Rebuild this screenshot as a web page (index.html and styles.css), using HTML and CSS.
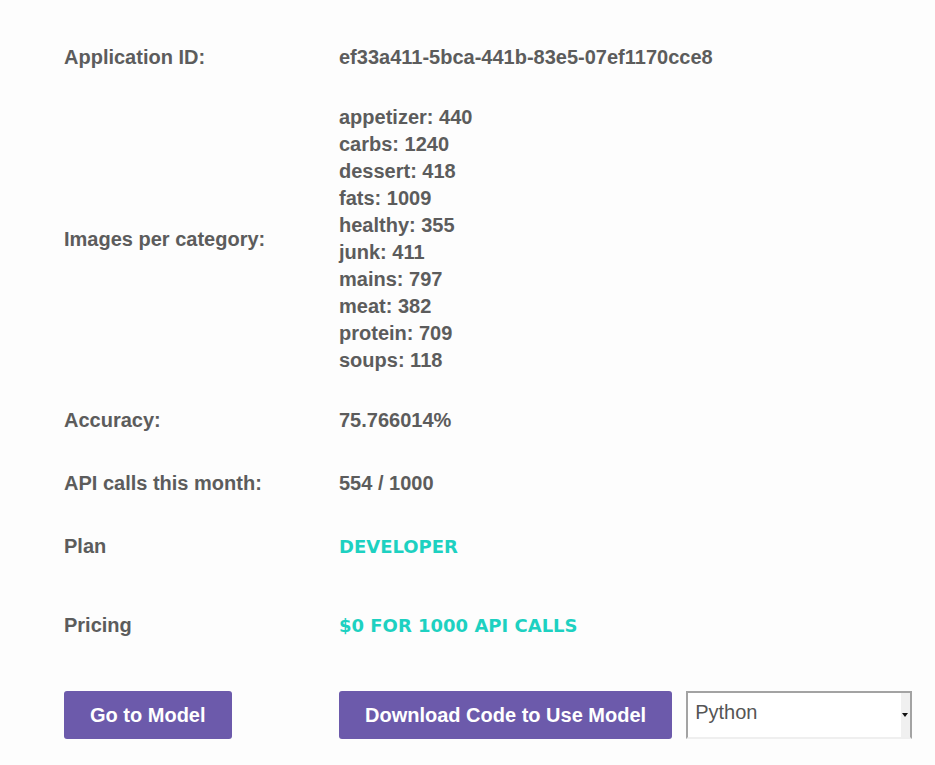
FILE: index.html
```html
<!DOCTYPE html>
<html lang="en">
<head>
    <meta charset="UTF-8">
    <meta name="viewport" content="width=device-width, initial-scale=1.0">
    <title>Application Details</title>
    <link rel="stylesheet" href="styles.css">
</head>
<body>
    <div class="details">
        <div class="row">
            <div class="label">Application ID:</div>
            <div class="value">ef33a411-5bca-441b-83e5-07ef1170cce8</div>
        </div>
        <div class="row row-list">
            <div class="label">Images per category:</div>
            <ul class="value category-list">
                <li>appetizer: 440</li>
                <li>carbs: 1240</li>
                <li>dessert: 418</li>
                <li>fats: 1009</li>
                <li>healthy: 355</li>
                <li>junk: 411</li>
                <li>mains: 797</li>
                <li>meat: 382</li>
                <li>protein: 709</li>
                <li>soups: 118</li>
            </ul>
        </div>
        <div class="row">
            <div class="label">Accuracy:</div>
            <div class="value">75.766014%</div>
        </div>
        <div class="row">
            <div class="label">API calls this month:</div>
            <div class="value">554 / 1000</div>
        </div>
        <div class="row">
            <div class="label">Plan</div>
            <div class="value highlight">DEVELOPER</div>
        </div>
        <div class="row row-pricing">
            <div class="label">Pricing</div>
            <div class="value highlight">$0 FOR 1000 API CALLS</div>
        </div>
        <div class="actions">
            <div class="label">
                <button class="btn">Go to Model</button>
            </div>
            <div class="value action-group">
                <button class="btn">Download Code to Use Model</button>
                <span class="select-wrap">
                    <select class="lang-select">
                        <option>Python</option>
                        <option>JavaScript</option>
                        <option>cURL</option>
                    </select>
                </span>
            </div>
        </div>
    </div>
</body>
</html>
```

FILE: styles.css
```css
body {
    margin: 0;
    background-color: #fdfdfd;
    font-family: "Liberation Sans", Arial, sans-serif;
    color: #5c5c5c;
}

.details {
    padding: 26px 0 0 64px;
}

.row {
    display: flex;
    align-items: center;
    padding: 18px 0;
    font-size: 20px;
    font-weight: bold;
    line-height: 27px;
}

.row-list {
    padding: 15px 0;
}

.row-pricing {
    margin-top: 16px;
}

.label {
    width: 275px;
    flex-shrink: 0;
}

.category-list {
    list-style: none;
    margin: 0;
    padding: 0;
}

.highlight {
    font-family: "DejaVu Sans", sans-serif;
    font-size: 18px;
    color: #1dd1c1;
}

.actions {
    display: flex;
    align-items: center;
    margin-top: 34px;
}

.action-group {
    display: flex;
    align-items: center;
    gap: 14px;
}

.btn {
    height: 48px;
    padding: 0 26px;
    border: none;
    border-radius: 3px;
    background: #6c5aab;
    color: #fff;
    font-family: "Liberation Sans", Arial, sans-serif;
    font-size: 20px;
    font-weight: bold;
    cursor: pointer;
}

.btn:hover {
    background: #5d4c9a;
}

.select-wrap {
    position: relative;
    display: inline-block;
}

.lang-select {
    -webkit-appearance: none;
    appearance: none;
    display: block;
    width: 226px;
    height: 48px;
    padding: 0 0 6px 7px;
    border-style: solid;
    border-width: 2px;
    border-color: #a3a3a3 #a3a3a3 #efefef #a3a3a3;
    border-radius: 0;
    background: linear-gradient(to left, #f0f0f0 9px, #fff 9px);
    color: #555;
    font-family: "Liberation Sans", Arial, sans-serif;
    font-size: 20px;
    outline: none;
}

.select-wrap::after {
    content: "";
    position: absolute;
    right: 4px;
    top: 22px;
    border-left: 3px solid transparent;
    border-right: 3px solid transparent;
    border-top: 4px solid #111;
    pointer-events: none;
}
```
